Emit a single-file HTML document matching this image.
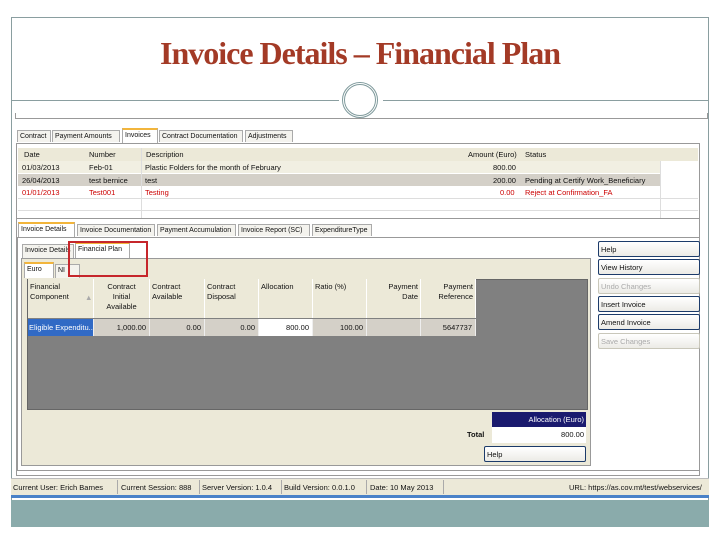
<!DOCTYPE html>
<html><head><meta charset="utf-8"><style>
*{margin:0;padding:0;box-sizing:border-box}
body{width:720px;height:540px;background:#fff;position:relative;overflow:hidden;font-family:"Liberation Sans",sans-serif;font-size:7.5px;color:#111}
div,span{position:absolute}
.t{white-space:nowrap;line-height:1}
.tab{background:#f4f3ee;border:1px solid #aaa;border-bottom:none;padding:2px 2px;font-size:7px;white-space:nowrap;overflow:hidden}
.btn{border:1px solid #1c3b6a;border-radius:2px;background:linear-gradient(#fff,#ecebe6);padding:3px 2px;font-size:7.5px;white-space:nowrap;left:598px;width:102px;height:16px}
.dis{border-color:#c9c7ba;color:#aaa}
.hd{background:#ece9d8;border-right:1px solid #fff;height:39px;top:279px;padding:3px 2px;font-size:7.5px;line-height:10px}
.c{height:17px;top:319px;background:#d4d0c8;border-right:1px solid #eee;text-align:right;padding:4px 3px;font-size:7.5px;white-space:nowrap;overflow:hidden}
</style></head><body>
<div style="left:11px;top:17px;width:698px;height:510px;border:1px solid #8a9ea0"></div>
<div class="t" style="left:0;width:720px;top:37px;text-align:center;font-family:'Liberation Serif',serif;font-size:32px;font-weight:bold;color:#a33a26;letter-spacing:-1px">Invoice Details – Financial Plan</div>
<div style="left:12px;top:100px;width:327px;height:1px;background:#8a9ea0"></div>
<div style="left:383px;top:100px;width:325px;height:1px;background:#8a9ea0"></div>
<div style="left:342px;top:82px;width:36px;height:36px;border:3px double #7f9a9c;border-radius:50%"></div>
<div style="left:15px;top:113px;width:693px;height:6px;border:1px solid #999;border-top:none"></div>
<!-- top tabs -->
<div class="tab" style="left:17px;top:130px;width:34px">Contract</div>
<div class="tab" style="left:52px;top:130px;width:68px">Payment Amounts</div>
<div class="tab" style="left:122px;top:128px;width:36px;height:15px;border-top:2px solid #f2b53c;background:#fff">Invoices</div>
<div class="tab" style="left:159px;top:130px;width:84px">Contract Documentation</div>
<div class="tab" style="left:245px;top:130px;width:48px">Adjustments</div>
<div style="left:16px;top:143px;width:684px;height:333px;border:1px solid #999;background:#fff"></div>
<!-- grid -->
<div style="left:18px;top:148px;width:680px;height:13px;background:#ece9d8"></div>
<div class="t" style="left:24px;top:151px">Date</div><div class="t" style="left:89px;top:151px">Number</div><div class="t" style="left:146px;top:151px">Description</div><div class="t" style="left:468px;top:151px">Amount (Euro)</div><div class="t" style="left:525px;top:151px">Status</div>
<div style="left:18px;top:161px;width:642px;height:12px;background:#f1efe2"></div>
<div style="left:18px;top:174px;width:642px;height:12px;background:#d4d0c8"></div>
<div style="left:18px;top:198px;width:680px;height:1px;background:#ddd"></div>
<div style="left:18px;top:210px;width:680px;height:1px;background:#ddd"></div>
<div style="left:141px;top:148px;width:1px;height:70px;background:#ddd"></div>
<div style="left:660px;top:161px;width:1px;height:57px;background:#ddd"></div>
<div class="t" style="left:22px;top:164px">01/03/2013</div><div class="t" style="left:89px;top:164px">Feb-01</div><div class="t" style="left:145px;top:164px">Plastic Folders for the month of February</div><div class="t" style="left:493px;top:164px">800.00</div>
<div class="t" style="left:22px;top:177px">26/04/2013</div><div class="t" style="left:89px;top:177px">test bernice</div><div class="t" style="left:145px;top:177px">test</div><div class="t" style="left:493px;top:177px">200.00</div><div class="t" style="left:525px;top:177px">Pending at Certify Work_Beneficiary</div>
<div class="t" style="left:22px;top:189px;color:#c00">01/01/2013</div><div class="t" style="left:89px;top:189px;color:#c00">Test001</div><div class="t" style="left:145px;top:189px;color:#c00">Testing</div><div class="t" style="left:500px;top:189px;color:#c00">0.00</div><div class="t" style="left:525px;top:189px;color:#c00">Reject at Confirmation_FA</div>
<div style="left:16px;top:218px;width:684px;height:1px;background:#999"></div>
<!-- lower tabs -->
<div class="tab" style="left:18px;top:222px;width:57px;height:15px;border-top:2px solid #f2b53c;background:#fff">Invoice Details</div>
<div class="tab" style="left:77px;top:224px;width:78px">Invoice Documentation</div>
<div class="tab" style="left:157px;top:224px;width:79px">Payment Accumulation</div>
<div class="tab" style="left:238px;top:224px;width:72px">Invoice Report (SC)</div>
<div class="tab" style="left:312px;top:224px;width:60px">ExpenditureType</div>
<div style="left:17px;top:237px;width:683px;height:234px;border:1px solid #999;background:#fff"></div>
<div style="left:21px;top:258px;width:570px;height:208px;border:1px solid #999;background:#ece9d8"></div>
<div class="tab" style="left:22px;top:244px;width:52px;height:14px">Invoice Details</div>
<div class="tab" style="left:75px;top:242px;width:55px;height:16px;border-top:2px solid #f2b53c;background:#fff">Financial Plan</div>
<div class="tab" style="left:24px;top:262px;width:30px;height:16px;border-top:2px solid #f2b53c;background:#fff">Euro</div>
<div class="tab" style="left:55px;top:264px;width:25px;height:14px">NI</div>
<div style="left:68px;top:241px;width:80px;height:36px;border:2px solid #c6262b"></div>
<!-- inner grid -->
<div style="left:27px;top:279px;width:561px;height:131px;background:#808080;border:1px solid #666"></div>
<div class="hd" style="left:28px;width:66px">Financial<br>Component <span style="left:57px;top:14px;color:#aaa">▲</span></div>
<div class="hd" style="left:94px;width:56px;text-align:center">Contract<br>Initial<br>Available</div>
<div class="hd" style="left:150px;width:55px">Contract<br>Available</div>
<div class="hd" style="left:205px;width:54px">Contract<br>Disposal</div>
<div class="hd" style="left:259px;width:54px">Allocation</div>
<div class="hd" style="left:313px;width:54px">Ratio (%)</div>
<div class="hd" style="left:367px;width:54px;text-align:right">Payment<br>Date</div>
<div class="hd" style="left:421px;width:55px;text-align:right">Payment<br>Reference</div>
<div class="c" style="left:28px;width:66px;background:#316ac5;color:#fff;text-align:left;padding-left:1px">Eligible Expenditu...</div>
<div class="c" style="left:94px;width:56px">1,000.00</div>
<div class="c" style="left:150px;width:55px">0.00</div>
<div class="c" style="left:205px;width:54px">0.00</div>
<div class="c" style="left:259px;width:54px;background:#fff">800.00</div>
<div class="c" style="left:313px;width:54px">100.00</div>
<div class="c" style="left:367px;width:54px"></div>
<div class="c" style="left:421px;width:55px">5647737</div>
<!-- totals -->
<div class="t" style="left:492px;top:412px;width:94px;height:15px;background:#1a1a6e;color:#fff;text-align:right;padding:4px 2px">Allocation (Euro)</div>
<div class="t" style="left:492px;top:427px;width:94px;height:16px;background:#fff;text-align:right;padding:4px 2px">800.00</div>
<div class="t" style="left:467px;top:431px;font-weight:bold">Total</div>
<div class="btn" style="left:484px;top:446px;width:102px">Help</div>
<!-- side buttons -->
<div class="btn" style="top:241px">Help</div>
<div class="btn" style="top:259px">View History</div>
<div class="btn dis" style="top:278px">Undo Changes</div>
<div class="btn" style="top:296px">Insert Invoice</div>
<div class="btn" style="top:314px">Amend Invoice</div>
<div class="btn dis" style="top:333px">Save Changes</div>
<!-- status bar -->
<div style="left:11px;top:478px;width:698px;height:18px;background:#ece9d8;border-top:1px solid #bbb"></div>
<div class="t" style="left:13px;top:484px">Current User: Erich Barnes</div>
<div class="t" style="left:121px;top:484px">Current Session: 888</div>
<div class="t" style="left:202px;top:484px">Server Version: 1.0.4</div>
<div class="t" style="left:284px;top:484px">Build Version: 0.0.1.0</div>
<div class="t" style="left:370px;top:484px">Date: 10 May 2013</div>
<div class="t" style="left:569px;top:484px">URL: https://as.cov.mt/test/webservices/</div>
<div style="left:117px;top:480px;width:1px;height:14px;background:#aaa"></div>
<div style="left:199px;top:480px;width:1px;height:14px;background:#aaa"></div>
<div style="left:281px;top:480px;width:1px;height:14px;background:#aaa"></div>
<div style="left:366px;top:480px;width:1px;height:14px;background:#aaa"></div>
<div style="left:443px;top:480px;width:1px;height:14px;background:#aaa"></div>
<div style="left:11px;top:495px;width:698px;height:3px;background:#4a82c8"></div>
<div style="left:11px;top:500px;width:698px;height:27px;background:#8aabab"></div>
</body></html>
